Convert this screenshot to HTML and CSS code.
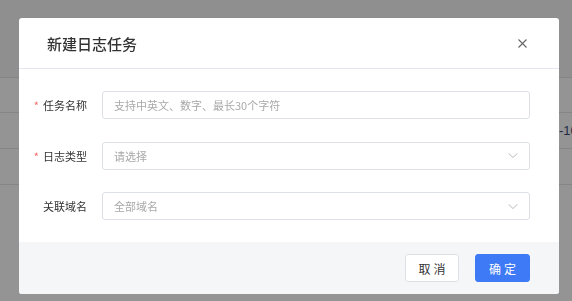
FILE: index.html
```html
<!DOCTYPE html>
<html lang="zh-CN">
<head>
    <meta charset="UTF-8">
    <meta name="viewport" content="width=device-width, initial-scale=1.0">
    <title>新建日志任务</title>
    <link rel="stylesheet" href="styles.css">
</head>
<body>
    <div class="page">
        <div class="table-head"></div>
        <div class="table-row"></div>
        <div class="table-row"><span class="cell-time">2024-10</span></div>
        <div class="table-row"></div>
    </div>

    <div class="mask">
        <div class="dialog">
            <div class="dialog-header">
                <span class="dialog-title">新建日志任务</span>
                <button class="dialog-close" aria-label="关闭">
                    <svg width="9" height="9" viewBox="0 0 9 9">
                        <path d="M0.5 0.5 L8.5 8.5 M8.5 0.5 L0.5 8.5" stroke="#666" stroke-width="1.1" fill="none"/>
                    </svg>
                </button>
            </div>

            <div class="dialog-body">
                <div class="form-item">
                    <label class="form-label required">任务名称</label>
                    <div class="form-control">
                        <input class="input" type="text" placeholder="支持中英文、数字、最长30个字符">
                    </div>
                </div>
                <div class="form-item">
                    <label class="form-label required">日志类型</label>
                    <div class="form-control">
                        <div class="select">
                            <span class="select-placeholder">请选择</span>
                            <svg class="select-arrow" width="10" height="5" viewBox="0 0 10 5">
                                <path d="M0.5 0.3 L5 4.5 L9.5 0.3" stroke="#bbb" stroke-width="1" fill="none"/>
                            </svg>
                        </div>
                    </div>
                </div>
                <div class="form-item">
                    <label class="form-label">关联域名</label>
                    <div class="form-control">
                        <div class="select">
                            <span class="select-placeholder">全部域名</span>
                            <svg class="select-arrow" width="10" height="5" viewBox="0 0 10 5">
                                <path d="M0.5 0.3 L5 4.5 L9.5 0.3" stroke="#bbb" stroke-width="1" fill="none"/>
                            </svg>
                        </div>
                    </div>
                </div>
            </div>

            <div class="dialog-footer">
                <button class="btn">取消</button>
                <button class="btn btn-primary">确定</button>
            </div>
        </div>
    </div>
</body>
</html>
```

FILE: styles.css
```css
:root {
    --primary-color: #3e7af6;
    --text-color: #333333;
    --placeholder-color: #a8a8a8;
    --border-color: #dcdfe6;
    --danger-color: #f56c6c;
}

* {
    box-sizing: border-box;
}

body {
    margin: 0;
    font-family: "Noto Sans CJK SC", "Noto Sans", sans-serif;
    color: var(--text-color);
    background: #ffffff;
}

/* page behind the mask */
.page {
    width: 572px;
    height: 301px;
    overflow: hidden;
}

.table-head {
    height: 78px;
    background: #f6f7f7;
    border-bottom: 1px solid #e6e6e6;
}

.table-row {
    height: 35px;
    border-bottom: 1px solid #e6e6e6;
    display: flex;
    align-items: center;
}

.table-row + .table-row {
    height: 36px;
}

.cell-time {
    margin-left: 530px;
    font-family: "Liberation Sans", Arial, sans-serif;
    font-size: 13px;
    color: #3a4f78;
    white-space: nowrap;
}

/* modal */
.mask {
    position: fixed;
    inset: 0;
    background: rgba(0, 0, 0, 0.42);
    padding: 18px 0 0 19px;
}

.dialog {
    width: 540px;
    background: #ffffff;
    border-radius: 3px;
    overflow: hidden;
}

.dialog-header {
    height: 51px;
    display: flex;
    align-items: center;
    justify-content: space-between;
    padding: 0 32px 0 28px;
    border-bottom: 1px solid #e4e7ee;
}

.dialog-title {
    font-size: 15px;
    font-weight: 500;
    color: #333;
}

.dialog-close {
    border: none;
    background: none;
    padding: 0;
    width: 9px;
    height: 9px;
    display: flex;
}

.dialog-body {
    display: flex;
    flex-direction: column;
    gap: 22.5px;
    padding: 22px 29px 22px 0;
}

.form-item {
    display: flex;
    align-items: center;
    height: 28px;
}

.form-label {
    width: 83px;
    padding-right: 15px;
    text-align: right;
    font-size: 11px;
    color: #333;
}

.form-label.required::before {
    content: "*";
    color: var(--danger-color);
    margin-right: 4px;
}

.form-control {
    flex: 1;
}

.input,
.select {
    width: 100%;
    height: 28px;
    border: 1px solid var(--border-color);
    border-radius: 3px;
    padding: 0 11px;
    font-family: inherit;
    font-size: 11px;
    color: var(--text-color);
    background: #ffffff;
    outline: none;
}

.input::placeholder {
    color: var(--placeholder-color);
}

.select {
    display: flex;
    align-items: center;
    justify-content: space-between;
}

.select-placeholder {
    color: var(--placeholder-color);
}

.dialog-footer {
    height: 52px;
    background: #f5f6f8;
    display: flex;
    align-items: center;
    justify-content: flex-end;
    gap: 16px;
    padding-right: 29px;
}

.btn {
    width: 54px;
    height: 28px;
    border: 1px solid var(--border-color);
    border-radius: 3px;
    background: #ffffff;
    color: #333;
    font-family: inherit;
    font-size: 12px;
    letter-spacing: 3px;
    padding: 0 0 0 3px;
    cursor: pointer;
}

.btn-primary {
    width: 55px;
    background: var(--primary-color);
    border-color: var(--primary-color);
    color: #ffffff;
}
```
